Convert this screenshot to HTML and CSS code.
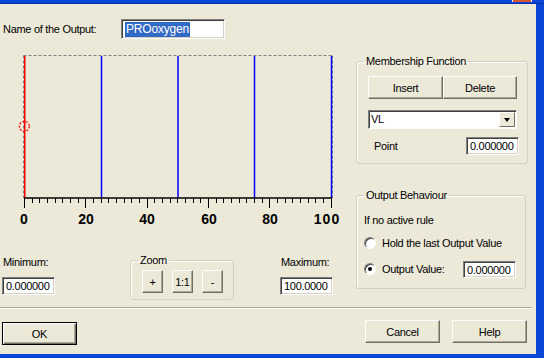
FILE: index.html
```html
<!DOCTYPE html>
<html lang="en">
<head>
  <meta charset="UTF-8" />
  <title>Output Properties</title>
  <link rel="stylesheet" href="styles.css">
</head>
<body>

<div class="titlebar"><span class="close"></span></div>

<div class="frame">
  <div class="body">

    <div class="left">
      <div class="name-row">
        <span class="name-label">Name of the Output:</span>
        <div class="textbox name-box"><span class="sel">PROoxygen</span></div>
      </div>

      <svg class="chart" width="345" height="180" viewBox="0 50 345 180">
        <g class="frame-dash">
          <path d="M23.5 55.5 H332.5 M23.5 55.5 V198 M332.5 55.5 V198" />
        </g>
        <line class="mf-red" x1="24.75" y1="56" x2="24.75" y2="198" />
        <line class="mf-blue" x1="101.5" y1="56" x2="101.5" y2="198" />
        <line class="mf-blue" x1="178" y1="56" x2="178" y2="198" />
        <line class="mf-blue" x1="254.5" y1="56" x2="254.5" y2="198" />
        <line class="mf-blue" x1="331.5" y1="56" x2="331.5" y2="198" />
        <circle class="point" cx="24.3" cy="126.3" r="5" />
        <line class="axis" x1="24" y1="198" x2="332" y2="198" />
        <path class="ticks" d="M32.5 198V203 M39.5 198V203 M47.5 198V203 M55.5 198V203 M62.5 198V203 M70.5 198V203 M78.5 198V203
          M93.5 198V203 M101.5 198V203 M108.5 198V203 M116.5 198V203 M124.5 198V203 M131.5 198V203 M139.5 198V203
          M154.5 198V203 M162.5 198V203 M170.5 198V203 M177.5 198V203 M185.5 198V203 M193.5 198V203 M200.5 198V203
          M216.5 198V203 M223.5 198V203 M231.5 198V203 M239.5 198V203 M246.5 198V203 M254.5 198V203 M262.5 198V203
          M277.5 198V203 M285.5 198V203 M292.5 198V203 M300.5 198V203 M308.5 198V203 M315.5 198V203 M323.5 198V203" />
        <path class="ticks" d="M24.5 198V208 M85.5 198V208 M147.5 198V208 M208.5 198V208 M269.5 198V208 M331.5 198V208" />
        <g class="axis-labels">
          <text x="24" y="224">0</text>
          <text x="86" y="224">20</text>
          <text x="147" y="224">40</text>
          <text x="209" y="224">60</text>
          <text x="270" y="224">80</text>
          <text x="327" y="224" class="wide">100</text>
        </g>
      </svg>

      <div class="range-row">
        <div class="range range-min">
          <div class="range-label">Minimum:</div>
          <div class="textbox num">0.000000</div>
        </div>

        <fieldset class="group zoom-group">
          <legend>Zoom</legend>
          <div class="zoom-buttons">
            <button class="btn small">+</button>
            <button class="btn small">1:1</button>
            <button class="btn small">-</button>
          </div>
        </fieldset>

        <div class="range range-max">
          <div class="range-label">Maximum:</div>
          <div class="textbox num">100.0000</div>
        </div>
      </div>
    </div>

    <div class="right">
      <fieldset class="group mf-group">
        <legend>Membership Function</legend>
        <div class="mf-body">
          <div class="btn-pair">
            <button class="btn insert">Insert</button>
            <button class="btn delete">Delete</button>
          </div>
          <div class="combo">
            <span class="combo-text">VL</span>
            <span class="combo-arrow"></span>
          </div>
          <div class="point-row">
            <span>Point</span>
            <div class="textbox num">0.000000</div>
          </div>
        </div>
      </fieldset>

      <fieldset class="group ob-group">
        <legend>Output Behaviour</legend>
        <div class="ob-body">
          <div class="ob-text">If no active rule</div>
          <div class="radio-row first">
            <span class="radio"></span>
            <span>Hold the last Output Value</span>
          </div>
          <div class="radio-row">
            <span class="radio checked"></span>
            <span>Output Value:</span>
            <div class="textbox num">0.000000</div>
          </div>
        </div>
      </fieldset>
    </div>

  </div>

  <div class="separator"></div>

  <div class="footer">
    <button class="btn default">OK</button>
    <div class="footer-right">
      <button class="btn wide-btn">Cancel</button>
      <button class="btn wide-btn">Help</button>
    </div>
  </div>
</div>

</body>
</html>
```

FILE: styles.css
```css
:root {
  --face: #ece9d8;
  --xp-blue: #0a46d8;
  --shadow: #716f64;
  --light-shadow: #aca899;
}

* {
  margin: 0;
  padding: 0;
  box-sizing: border-box;
}

body {
  width: 544px;
  height: 358px;
  overflow: hidden;
  background: var(--face);
  font-family: 'Liberation Sans', Arial, sans-serif;
  font-size: 11px;
  letter-spacing: -0.3px;
  line-height: 13px;
  color: #000;
}

/* window chrome */
.titlebar {
  height: 4px;
  background: var(--xp-blue);
  border-bottom: 1px solid #0030b0;
  display: flex;
  justify-content: flex-end;
}

.close {
  width: 20px;
  height: 2px;
  margin-right: 12px;
  background: #d9542f;
  border-left: 1px solid #fff;
  border-right: 1px solid #fff;
}

.frame {
  height: 354px;
  border-right: 8px solid var(--xp-blue);
  border-bottom: 4px solid var(--xp-blue);
  display: flex;
  flex-direction: column;
}

.body {
  display: flex;
  height: 303px;
}

.left {
  width: 345px;
}

/* controls */
.textbox {
  background: #fff;
  border: 1px solid;
  border-color: #808080 #fff #fff #808080;
  box-shadow: inset 1px 1px 0 #404040, inset -1px -1px 0 #d4d0c8;
  white-space: nowrap;
  overflow: hidden;
}

.textbox.num {
  width: 53px;
  height: 18px;
  padding: 2px 0 0 3px;
}

.btn {
  font-family: inherit;
  font-size: 11px;
  letter-spacing: -0.3px;
  background: var(--face);
  color: #000;
  border: 1px solid;
  border-color: #fff var(--shadow) var(--shadow) #fff;
  box-shadow: inset -1px -1px 0 var(--light-shadow);
}

.group {
  border: 1px solid #d0d0bf;
  border-radius: 3px;
  box-shadow: 1px 1px 0 #fff inset;
}

.group legend {
  margin-left: 7px;
  padding: 0 2px;
  line-height: 13px;
}

/* name */
.name-row {
  display: flex;
  align-items: center;
  margin-top: 15px;
  height: 20px;
}

.name-label {
  width: 121px;
  padding-left: 3px;
}

.name-box {
  width: 104px;
  height: 20px;
  padding: 2px 0 0 3px;
}

.sel {
  display: inline-block;
  height: 15px;
  padding: 1px 1px 0;
  background: #316ac5;
  color: #fff;
  font-size: 12px;
  letter-spacing: -0.2px;
}

/* chart */
.chart {
  display: block;
  margin-top: 11px;
}

.frame-dash path {
  fill: none;
  stroke: #808080;
  stroke-width: 1;
  stroke-dasharray: 3 2;
}

.mf-red {
  stroke: #ff0000;
  stroke-width: 1.5;
}

.mf-blue {
  stroke: #0000ff;
  stroke-width: 1.5;
}

.point {
  fill: none;
  stroke: #ff0000;
  stroke-width: 1.2;
  stroke-dasharray: 2 1.5;
}

.axis {
  stroke: #000;
  stroke-width: 1.5;
}

.ticks {
  stroke: #000;
  stroke-width: 1;
}

.axis-labels text {
  font-family: 'Liberation Sans', Arial, sans-serif;
  font-weight: bold;
  font-size: 14px;
  letter-spacing: 0;
  text-anchor: middle;
}

.axis-labels .wide {
  letter-spacing: 1px;
}

/* min / zoom / max */
.range-row {
  display: flex;
  align-items: flex-start;
  padding-top: 24px;
}

.range-label {
  margin-top: 2px;
  padding-left: 1px;
}

.range .textbox {
  margin-top: 8px;
}

.range-min {
  margin-left: 2px;
}

.zoom-group {
  width: 104px;
  height: 46px;
  margin-left: 75px;
}

.zoom-buttons {
  display: flex;
  gap: 9px;
  padding: 3px 0 0 11px;
}

.btn.small {
  width: 21px;
  height: 23px;
}

.range-max {
  margin-left: 46px;
}

/* right panel */
.right {
  padding-left: 11px;
}

.mf-group {
  width: 170px;
  margin-top: 51px;
}

.mf-body {
  padding: 8px 8px 8px 11px;
}

.btn-pair {
  display: flex;
}

.btn.insert {
  width: 75px;
  height: 23px;
}

.btn.delete {
  width: 74px;
  height: 23px;
}

.combo {
  display: flex;
  width: 149px;
  height: 19px;
  margin-top: 11px;
  background: #fff;
  border: 1px solid;
  border-color: #808080 #fff #fff #808080;
  box-shadow: inset 1px 1px 0 #404040;
}

.combo-text {
  flex: 1;
  padding: 2px 0 0 2px;
}

.combo-arrow {
  width: 16px;
  height: 15px;
  margin: 1px 1px 0 0;
  display: flex;
  align-items: center;
  justify-content: center;
  background: var(--face);
  border: 1px solid;
  border-color: #fff var(--shadow) var(--shadow) #fff;
}

.combo-arrow::after {
  content: "";
  border-left: 3.5px solid transparent;
  border-right: 3.5px solid transparent;
  border-top: 4px solid #000;
}

.point-row {
  display: flex;
  align-items: center;
  justify-content: space-between;
  margin-top: 8px;
  padding-left: 6px;
  width: 151px;
}

.ob-group {
  width: 170px;
  margin-top: 25px;
}

.ob-body {
  padding: 12px 8px 10px 7px;
}

.radio-row {
  display: flex;
  align-items: center;
  height: 18px;
  margin-top: 8px;
  gap: 6px;
}

.radio-row.first {
  margin-top: 7px;
}

.radio-row .textbox {
  margin-left: auto;
  height: 17px;
  margin-right: 1px;
}

.radio {
  width: 12px;
  height: 12px;
  border-radius: 50%;
  background: #fff;
  border: 1px solid;
  border-color: #808080 #fff #fff #808080;
  box-shadow: inset 1px 1px 0 #404040;
  display: flex;
  align-items: center;
  justify-content: center;
}

.radio.checked::after {
  content: "";
  width: 4px;
  height: 4px;
  border-radius: 50%;
  background: #000;
}

/* bottom buttons */
.separator {
  width: 532px;
  height: 2px;
  border-top: 1px solid var(--light-shadow);
  border-bottom: 1px solid #fff;
}

.footer {
  display: flex;
  align-items: flex-start;
  padding-top: 11px;
  width: 536px;
}

.btn.default {
  width: 75px;
  height: 23px;
  margin: 2px 0 0 2px;
  border: 1px solid #000;
  box-shadow: inset 1px 1px 0 #fff, inset -1px -1px 0 var(--shadow), inset -2px -2px 0 var(--light-shadow);
}

.footer-right {
  display: flex;
  gap: 12px;
  margin-left: auto;
  margin-right: 9px;
}

.btn.wide-btn {
  width: 75px;
  height: 23px;
}
```
